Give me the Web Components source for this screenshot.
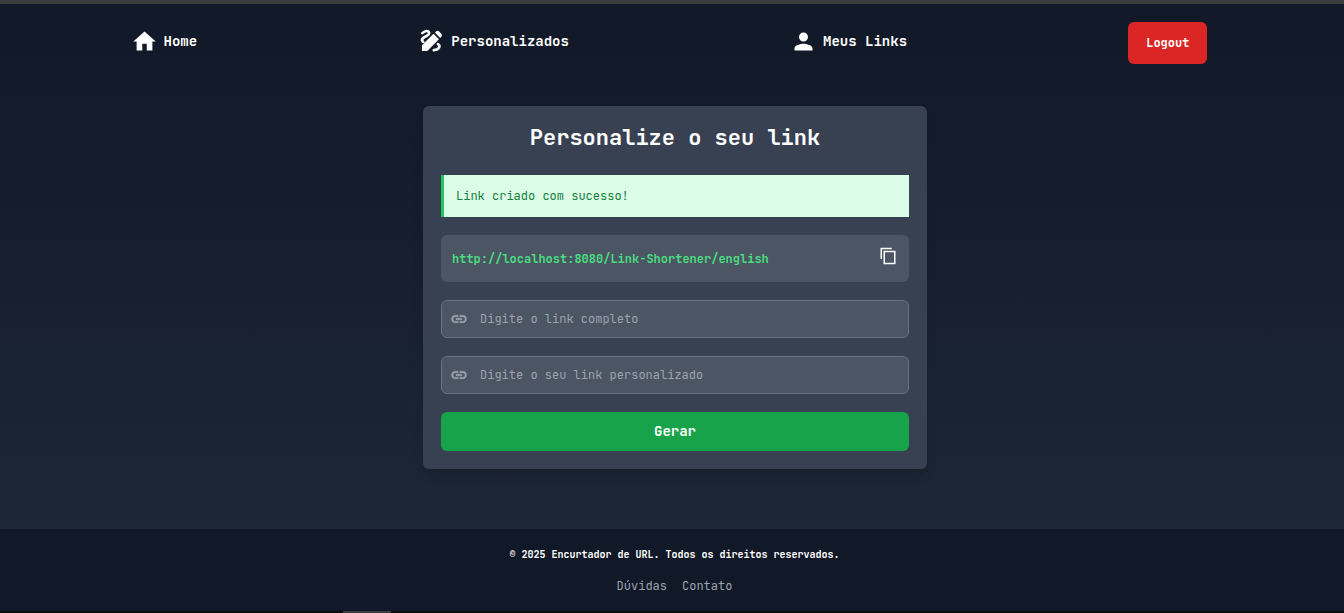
<!DOCTYPE html>
<html lang="pt-BR">
<head>
<meta charset="utf-8">
<meta name="viewport" content="width=device-width, initial-scale=1">
<title>Encurtador de URL</title>
<style>
  html, body { margin: 0; }
  body { font-family: "JetBrains Mono", "DejaVu Sans Mono", monospace; font-size: 12px; line-height: 18px; color: #fff; }
</style>
</head>
<body>
<app-shell>
  <nav-bar slot="header">
    <nav-link href="#home" icon="home">Home</nav-link>
    <nav-link href="#personalizados" icon="design">Personalizados</nav-link>
    <nav-link href="#links" icon="person">Meus Links</nav-link>
    <action-button tone="danger">Logout</action-button>
  </nav-bar>
  <link-card heading="Personalize o seu link">
    <status-message>Link criado com sucesso!</status-message>
    <short-link>http://localhost:8080/Link-Shortener/english</short-link>
    <link-field label="Digite o link completo" name="url"></link-field>
    <link-field label="Digite o seu link personalizado" name="alias"></link-field>
    <action-button tone="success">Gerar</action-button>
  </link-card>
  <site-footer slot="footer">© 2025 Encurtador de URL. Todos os direitos reservados.</site-footer>
</app-shell>

<script>
const ICONS = {
  home: '<path d="M10 20v-6h4v6h5v-8h3L12 3 2 12h3v8z"/>',
  person: '<path d="M12 12c2.21 0 4-1.79 4-4s-1.79-4-4-4-4 1.79-4 4 1.79 4 4 4zm0 2c-2.67 0-8 1.34-8 4v2h16v-2c0-2.66-5.33-4-8-4z"/>',
  design: '<path d="M3.500 20.500V15.300L13.800 5.200 18.600 10 8.300 20.500zM15 4.100l1-1c.8-.8 2-.8 2.800 0l1.900 1.900c.8.8.8 2 0 2.800l-1 1z"/><path fill="none" stroke="currentColor" stroke-width="2.300" stroke-linecap="round" d="M3.800 4.600C5.500 3 7.500 2.200 9 3c1.800 1.100.6 3-1.300 4C5.400 8.200 3.500 9 3.500 10.600c0 .8.500 1.300 1.200 1.700M17.700 14.300c2.300 1.200 1.900 4.900-3.700 5.400"/>',
  link: '<path stroke="currentColor" stroke-width=".6" d="M3.900 12c0-1.710 1.390-3.100 3.100-3.100h4V7H7c-2.760 0-5 2.240-5 5s2.240 5 5 5h4v-1.900H7c-1.710 0-3.100-1.390-3.100-3.100zM8 13h8v-2H8v2zm9-6h-4v1.900h4c1.710 0 3.100 1.390 3.100 3.100s-1.390 3.100-3.100 3.100h-4V17h4c2.760 0 5-2.240 5-5s-2.240-5-5-5z"/>',
  copy: '<path d="M17 1H2v15h2V3h13zm5 4H6v18h16V5zm-2 16H8V7h12v14z"/>'
};
const svg = (name) => `<svg viewBox="0 0 24 24" fill="currentColor" aria-hidden="true">${ICONS[name]}</svg>`;

class Base extends HTMLElement {
  connectedCallback() {
    if (this.shadowRoot) return;
    this.attachShadow({ mode: 'open' }).innerHTML =
      `<style>*{box-sizing:border-box}button,input{font:inherit}svg{display:block}${this.css()}</style>${this.html()}`;
  }
}

customElements.define('app-shell', class extends Base {
  css() { return `
    :host{display:flex;flex-direction:column;min-height:100vh;box-sizing:border-box;
      border-top:4px solid #3c3c3c;border-bottom:2px solid #0b0d12;
      background:linear-gradient(to bottom,#111827,#1f2937)}
    main{flex:1;display:flex;justify-content:center;align-items:flex-start;padding:24px 18px 60px 24px}
    ::slotted(link-card){flex:0 1 504px}
    .thumb{position:absolute;left:343px;bottom:0;width:48px;height:2px;background:#3c3c3c}`; }
  html() { return `<slot name="header"></slot><main><slot></slot></main><slot name="footer"></slot><div class="thumb"></div>`; }
});

customElements.define('nav-bar', class extends Base {
  css() { return `:host{display:block}nav{display:flex;justify-content:space-around;align-items:center;padding:18px 26px 18px 20px}`; }
  html() { return `<nav><slot></slot></nav>`; }
});

customElements.define('nav-link', class extends Base {
  css() { return `:host{display:block;font-weight:700;font-size:14px;line-height:20px}
    a{display:flex;align-items:center;gap:6px;padding-bottom:4px;color:#fff;text-decoration:none}
    svg{width:27px;height:27px}`; }
  html() { return `<a href="${this.getAttribute('href')}">${svg(this.getAttribute('icon'))}<span><slot></slot></span></a>`; }
});

customElements.define('action-button', class extends Base {
  css() { return `:host{display:block;font-weight:700;font-size:12px;line-height:18px}
    :host([tone=success]){font-size:14px;line-height:21px}
    button{display:block;width:100%;border:0;border-radius:6px;padding:12px 18px;color:#fff;background:#dc2626;cursor:pointer}
    :host([tone=success]) button{padding:9px 18px;background:#16a34a}`; }
  html() { return `<button type="button"><slot></slot></button>`; }
});

customElements.define('link-card', class extends Base {
  css() { return `:host{display:block;box-sizing:border-box;padding:18px;border-radius:6px;background:#374151;
      box-shadow:0 9px 14px -3px #0000001a,0 4px 6px -4px #0000001a}
    h1{margin:0 0 24px;font-size:22px;line-height:27px;font-weight:700;text-align:center}
    form{display:flex;flex-direction:column;gap:18px}`; }
  html() { return `<h1>${this.getAttribute('heading')}</h1><form><slot></slot></form>`; }
});

customElements.define('status-message', class extends Base {
  css() { return `:host{display:block;padding:12px;border-left:3px solid #22c55e;background:#dcfce7;color:#15803d}`; }
  html() { return `<div role="status"><slot></slot></div>`; }
});

customElements.define('short-link', class extends Base {
  css() { return `:host{display:flex;align-items:center;justify-content:space-between;padding:11px;border-radius:6px;background:#4b5563}
    code{font-family:inherit;font-weight:700;font-variant-ligatures:none;color:#4ade80}
    button{height:25px;border:0;padding:0 1px 6px;background:none;color:#fff;cursor:pointer}
    svg{width:18px;height:18px}`; }
  html() { return `<code><slot></slot></code><button type="button" aria-label="Copiar link">${svg('copy')}</button>`; }
});

customElements.define('link-field', class extends Base {
  css() { return `:host{display:block}
    label{display:flex;align-items:center;gap:12px;padding:0 8px;border:1px solid #6b7280;border-radius:6px;background:#4b5563;color:#9ca3af}
    svg{flex:none;width:18px;height:18px}
    input{flex:1;min-width:0;height:36px;padding:0;border:0;outline:0;background:none;color:#fff}
    input::placeholder{color:#9ca3af;opacity:1}`; }
  html() { const t = this.getAttribute('label');
    return `<label>${svg('link')}<input type="text" name="${this.getAttribute('name')}" placeholder="${t}" aria-label="${t}"></label>`; }
});

customElements.define('site-footer', class extends Base {
  css() { return `:host{display:block;padding:17px 18px 16px 23px;background:#111827;text-align:center}
    p{margin:0 0 13px;font-size:10px;font-weight:700}
    nav{display:flex;justify-content:center;gap:15px}
    a{color:#9ca3af;text-decoration:none}`; }
  html() { return `<p><slot></slot></p><nav><a href="#duvidas">Dúvidas</a><a href="#contato">Contato</a></nav>`; }
});
</script>
</body>
</html>
